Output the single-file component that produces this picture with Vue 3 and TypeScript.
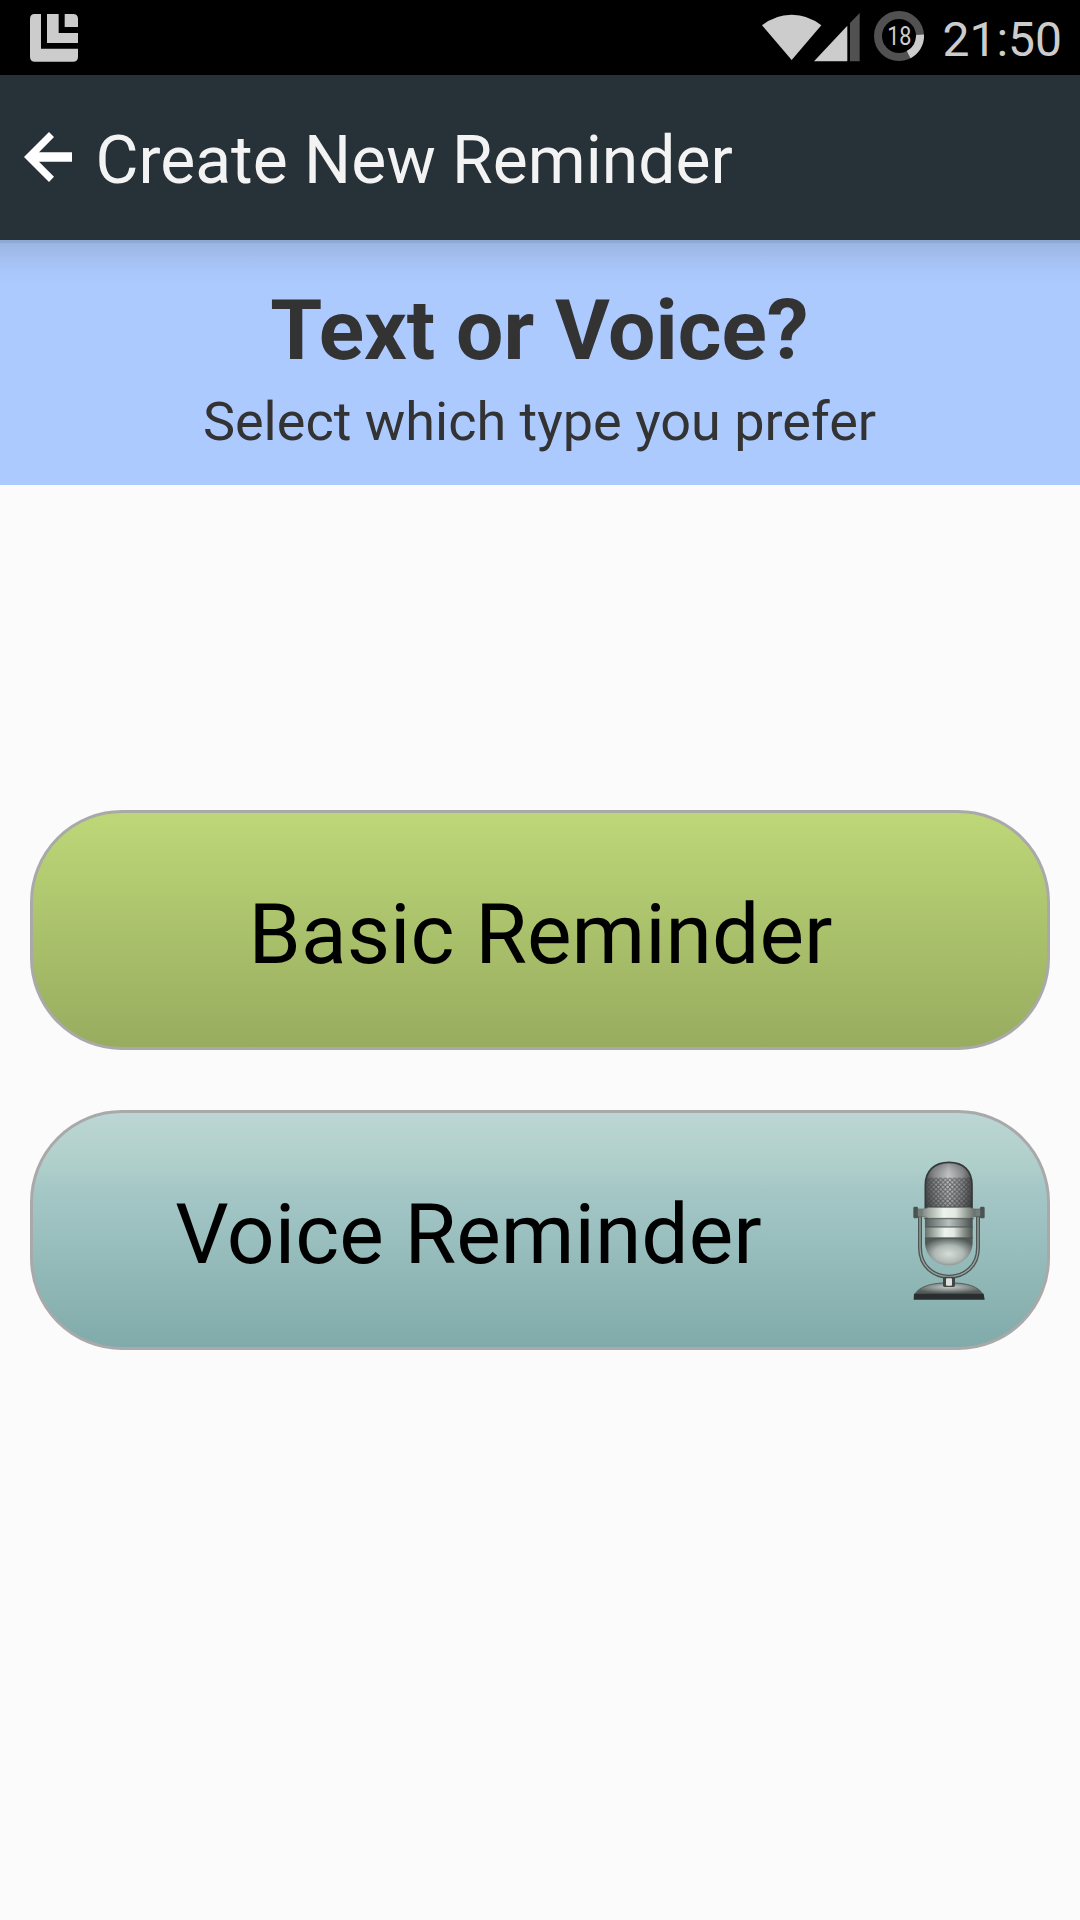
<script setup lang="ts">
const time = '21:50'
const badge = '18'
</script>

<template>
  <div class="screen">
    <div class="status">
      <svg class="app-icon" width="48" height="48" viewBox="90 41 144 144">
        <g fill="#ccc">
          <path d="M104 41H123V145H234V169Q234 184 219 184H105Q90 184 90 169V56Q90 41 104 41Z" />
          <path d="M141 41H176V98H234V128H141Z" />
          <path d="M194 41H219Q234 41 234 56V80H194Z" />
        </g>
      </svg>
      <svg width="100" height="75" viewBox="60 0 300 225">
        <path d="M66 76Q105 44 155 44T244 76L155 180Z" fill="#ccc" />
        <path d="M222 184L322 77V184Z" fill="#ccc" />
        <path d="M330 69L359 39V184H330Z" fill="#515151" />
      </svg>
      <svg class="ring" width="50" height="75" viewBox="402 0 150 225">
        <circle cx="477" cy="108" r="63" fill="none" stroke="#515151" stroke-width="24" />
        <path d="M540 104A63 63 0 0 1 506 164" fill="none" stroke="#ccc" stroke-width="24" />
        <text x="478" y="135" text-anchor="middle" textLength="73" lengthAdjust="spacingAndGlyphs" class="badge">{{ badge }}</text>
      </svg>
      <span class="clock">{{ time }}</span>
    </div>

    <header class="bar">
      <svg class="back" width="48" height="50" viewBox="72 186 144 150">
        <path d="M72 261L147 186L162 201L117 247H216V275H117L162 320L147 336Z" fill="#fff" />
      </svg>
      <h1>Create New Reminder</h1>
    </header>

    <section class="banner">
      <h2>Text or Voice?</h2>
      <p>Select which type you prefer</p>
    </section>

    <main class="choices">
      <button class="choice basic"><span class="label">Basic Reminder</span></button>
      <button class="choice voice">
        <span class="label">Voice Reminder</span>
        <svg class="mic" width="90" height="150" viewBox="72 75 270 450">
          <defs>
            <linearGradient id="head" x1="0" x2="1" y1="0" y2="0">
              <stop offset="0" stop-color="#3c3f40" />
              <stop offset=".2" stop-color="#7c7e80" />
              <stop offset=".5" stop-color="#bcbec0" />
              <stop offset=".8" stop-color="#7c7e80" />
              <stop offset="1" stop-color="#333637" />
            </linearGradient>
            <linearGradient id="shade" x1="0" x2="0" y1="0" y2="1">
              <stop offset="0" stop-color="#333" stop-opacity=".35" />
              <stop offset=".35" stop-color="#fff" stop-opacity=".08" />
              <stop offset="1" stop-color="#222" stop-opacity=".2" />
            </linearGradient>
            <linearGradient id="band" x1="0" x2="1" y1="0" y2="0">
              <stop offset="0" stop-color="#6a706c" />
              <stop offset=".2" stop-color="#a9b1ab" />
              <stop offset=".42" stop-color="#eef3ee" />
              <stop offset=".6" stop-color="#e2e8e2" />
              <stop offset=".8" stop-color="#8e9690" />
              <stop offset="1" stop-color="#4c524e" />
            </linearGradient>
            <linearGradient id="body" x1="0" x2="1" y1="0" y2="0">
              <stop offset="0" stop-color="#535b58" />
              <stop offset=".25" stop-color="#88908d" />
              <stop offset=".5" stop-color="#b9c1be" />
              <stop offset=".75" stop-color="#828a87" />
              <stop offset="1" stop-color="#454c49" />
            </linearGradient>
            <radialGradient id="bowl" cx=".5" cy=".6" r=".6">
              <stop offset="0" stop-color="#d6deda" />
              <stop offset=".5" stop-color="#afb8b4" />
              <stop offset="1" stop-color="#515956" />
            </radialGradient>
            <radialGradient id="foot" cx=".5" cy=".35" r=".55">
              <stop offset="0" stop-color="#c4cac8" />
              <stop offset=".5" stop-color="#8c9492" />
              <stop offset="1" stop-color="#525a58" />
            </radialGradient>
            <pattern id="mesh" width="14" height="14" patternUnits="userSpaceOnUse">
              <path d="M0 0L14 14M14 0L0 14" stroke="#3c3e40" stroke-width="3" opacity=".7" />
            </pattern>
            <filter id="soft" x="-5%" y="-5%" width="110%" height="110%">
              <feGaussianBlur stdDeviation="1.8" />
            </filter>
          </defs>
          <g filter="url(#soft)">
            <path d="M120 255V350C120 405 160 437 207 437S294 405 294 350V255" fill="none" stroke="#4c5553" stroke-width="12" />
            <path d="M120 255V350C120 405 160 437 207 437S294 405 294 350V255" fill="none" stroke="#98a4a1" stroke-width="4" />
            <path d="M136 230V162C136 120 163 94 207 94S276 120 276 162V230Z" fill="url(#head)" />
            <path d="M136 230V162C136 120 163 94 207 94S276 120 276 162V230Z" fill="url(#shade)" />
            <path d="M140 230V140H272V230Z" fill="url(#mesh)" />
            <path d="M136 230V162C136 120 163 94 207 94S276 120 276 162V230Z" fill="none" stroke="#35393a" stroke-width="5" />
            <path d="M135 260H278V292H135Z" fill="url(#body)" />
            <path d="M135 318H278V332C278 376 244 403 207 403S135 376 135 332Z" fill="url(#bowl)" />
            <path d="M135 288H278V320H135Z" fill="url(#band)" />
            <path d="M135 288H278M135 321H278M132 263H281" stroke="#4c5451" stroke-width="3" />
            <path d="M112 234H132L146 229H268L282 234H302V257H282L268 262H146L132 257H112Z" fill="url(#band)" stroke="#5c6461" stroke-width="2" />
            <rect x="100" y="227" width="14" height="35" rx="4" fill="#4c5351" />
            <rect x="300" y="227" width="14" height="35" rx="4" fill="#4c5351" />
            <rect x="113" y="235" width="15" height="20" rx="4" fill="#737d7a" />
            <rect x="286" y="235" width="15" height="20" rx="4" fill="#737d7a" />
            <path d="M104 490C118 466 155 457 190 456H224C260 457 296 466 309 490Z" fill="url(#foot)" stroke="#58605e" stroke-width="3" />
            <path d="M102 488H311L314 506H101Z" fill="#292f2e" />
            <rect x="189" y="437" width="36" height="31" rx="5" fill="#3f4644" />
            <rect x="198" y="442" width="18" height="22" rx="3" fill="#dde2e0" />
          </g>
        </svg>
      </button>
    </main>
  </div>
</template>

<style>
body {
  background: #fbfbfb;
}
</style>

<style scoped>
.screen {
  display: flex;
  flex-direction: column;
  height: 1920px;
  background: #fbfbfb;
  font-family: Roboto, sans-serif;
}
.screen svg {
  flex: none;
  display: block;
}
.status {
  height: 75px;
  display: flex;
  align-items: center;
  background: #000;
  padding: 0 18px 0 30px;
}
.status .app-icon {
  margin-right: auto;
}
.ring {
  margin: 0 18px 0 14px;
}
.badge {
  font-size: 76px;
  fill: #ccc;
}
.clock {
  font-size: 48px;
  line-height: 56px;
  padding-top: 4px;
  color: #ccc;
}
.bar {
  height: 165px;
  display: flex;
  align-items: center;
  gap: 23.5px;
  padding-left: 24px;
  background: #263238;
}
.back {
  margin-bottom: 1px;
}
.bar h1 {
  margin: 0;
  padding-top: 6px;
  font-size: 66px;
  line-height: 78px;
  font-weight: 400;
  color: #f3f3f3;
}
.banner {
  box-sizing: border-box;
  height: 245px;
  padding: 41px 1px 0 0;
  text-align: center;
  color: #333;
  background: linear-gradient(#8fa9d5 0, #8fa9d5 3px, #9bb5e3 3px, #a4bff0 18px, #aac7fb 32px, #adcaff 44px);
}
.banner h2 {
  margin: 0;
  font-size: 84px;
  line-height: 100px;
  font-weight: 700;
}
.banner p {
  margin: 9px 0 0;
  font-size: 54px;
  line-height: 64px;
}
.choices {
  flex: 1;
  display: flex;
  flex-direction: column;
  gap: 60px;
  padding: 325px 30px 0;
}
.choice {
  box-sizing: border-box;
  height: 240px;
  display: flex;
  align-items: center;
  padding: 0;
  border: 3px solid #a9a9a9;
  border-radius: 92px;
  font: 400 84px/100px Roboto, sans-serif;
  color: #000;
}
.label {
  flex: 1;
  padding-top: 10px;
  text-align: center;
}
.basic {
  background: linear-gradient(#bdd778, #98ac5f);
}
.basic .label {
  padding-left: 1px;
}
.voice {
  background: linear-gradient(#bcd6d4 0, #afcfca 22%, #a5c8c7 32%, #80abaa 100%);
}
.mic {
  margin: 2px 53px 0 0;
}
</style>
